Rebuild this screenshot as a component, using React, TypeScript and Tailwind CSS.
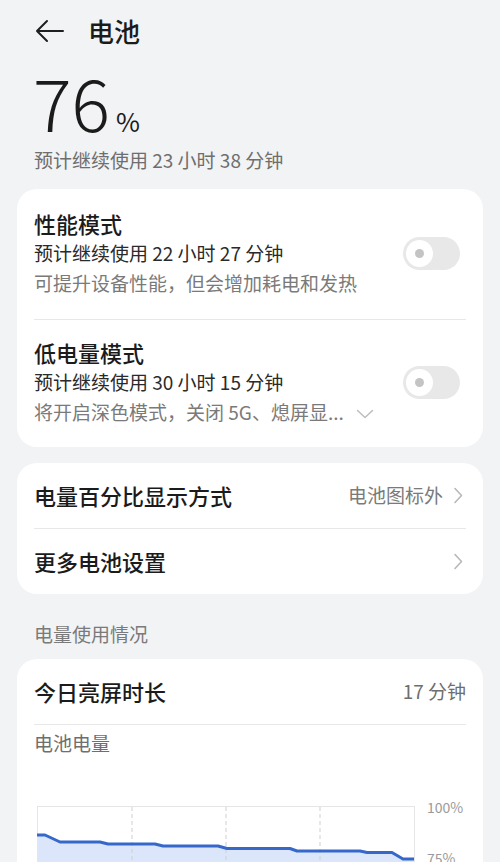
import React from 'react';

const FONT = { fontFamily: '"Noto Sans CJK SC", "Noto Sans", sans-serif' };

function Toggle() {
  return (
    <div className="w-[57px] h-[33px] rounded-full bg-[#e8e8e8] flex items-center pl-[3px] shrink-0 mr-[6px]">
      <div className="w-[27px] h-[27px] rounded-full bg-white flex items-center justify-center">
        <div className="w-[9px] h-[9px] rounded-full bg-[#c4c4c4]" />
      </div>
    </div>
  );
}

function ChevronRight() {
  return (
    <svg width="10" height="17" viewBox="0 0 10 17" className="shrink-0">
      <path d="M2 1.5 L8.5 8.5 L2 15.5" fill="none" stroke="#b8b8b8" strokeWidth="1.6" strokeLinecap="round" strokeLinejoin="round" />
    </svg>
  );
}

function ModeRow({ title, est, desc, more }: { title: string; est: string; desc: string; more?: boolean }) {
  return (
    <div className="flex items-center justify-between">
      <div className="flex flex-col">
        <span className="text-[22px] leading-[30px] font-medium text-[#1b1b1b]">{title}</span>
        <span className="text-[19px] leading-[29px] text-[#2a2a2a]">{est}</span>
        <span className="text-[19px] leading-[31px] text-[#7a7a7a] flex items-center">
          {desc}
          {more && (
            <svg width="18" height="10" viewBox="0 0 18 10" className="ml-[12px] mt-[4px]">
              <path d="M1.5 1.5 L9 8.5 L16.5 1.5" fill="none" stroke="#bdbdbd" strokeWidth="1.5" strokeLinecap="round" strokeLinejoin="round" />
            </svg>
          )}
        </span>
      </div>
      <Toggle />
    </div>
  );
}

const pts: [number, number][] = [
  [0, 29], [8, 29], [23, 36], [63, 36], [71, 38], [118, 38], [126, 40], [181, 40],
  [190, 42.5], [253, 42.5], [260, 45], [323, 45], [330, 46.5], [355, 46.5], [366, 53], [377, 53],
];

function Chart() {
  const line = pts.map((p) => p.join(',')).join(' ');
  const area = `0,120 ${line} 377,120`;
  return (
    <div className="flex mt-[49px] ml-[3px]">
      <svg width="378" height="120" viewBox="0 0 378 120" className="shrink-0">
        <polygon points={area} fill="#dbe6fa" />
        <line x1="0.5" y1="0.5" x2="377.5" y2="0.5" stroke="#e6e6e6" strokeWidth="1" />
        <line x1="0.5" y1="0" x2="0.5" y2="120" stroke="#e6e6e6" strokeWidth="1" />
        <line x1="377.5" y1="0" x2="377.5" y2="120" stroke="#e6e6e6" strokeWidth="1" />
        {[95, 189, 283].map((x) => (
          <line key={x} x1={x} y1="1" x2={x} y2="120" stroke="#cfcfcf" strokeWidth="1" strokeDasharray="4 3" />
        ))}
        <polyline points={line} fill="none" stroke="#3568c9" strokeWidth="3" strokeLinejoin="round" />
      </svg>
      <div className="flex flex-col ml-[12px] text-[14px] text-[#9a9a9a] leading-none">
        <span className="-mt-[6px]">100%</span>
        <span className="mt-[37px]">75%</span>
      </div>
    </div>
  );
}

export default function App() {
  return (
    <div className="w-[500px] h-[862px] overflow-hidden bg-[#f1f3f5]" style={FONT}>
      <div className="h-[62px] flex items-center pl-[35px]">
        <svg width="29" height="24" viewBox="0 0 29 24">
          <path d="M28 12 H2 M12 2 L2 12 L12 22" fill="none" stroke="#1f1f1f" strokeWidth="2" strokeLinecap="round" strokeLinejoin="round" />
        </svg>
        <span className="ml-[24px] text-[26px] font-medium text-[#1b1b1b] leading-none">电池</span>
      </div>

      <div className="pl-[33px] pt-[1px] flex items-baseline">
        <span className="text-[72px] font-light leading-[76px] text-[#1b1b1b]">76</span>
        <span className="ml-[6px] text-[26px] text-[#1b1b1b]">%</span>
      </div>
      <div className="pl-[34px] mt-[6px] text-[19px] leading-[28px] text-[#6e6e6e]">预计继续使用 23 小时 38 分钟</div>

      <div className="mx-[17px] mt-[15px] bg-white rounded-[20px] px-[17px]">
        <div className="pt-[19px] pb-[21px]">
          <ModeRow title="性能模式" est="预计继续使用 22 小时 27 分钟" desc="可提升设备性能，但会增加耗电和发热" />
        </div>
        <div className="h-px bg-[#e8e8e8]" />
        <div className="pt-[17px] pb-[20px]">
          <ModeRow title="低电量模式" est="预计继续使用 30 小时 15 分钟" desc="将开启深色模式，关闭 5G、熄屏显..." more />
        </div>
      </div>

      <div className="mx-[17px] mt-[16px] bg-white rounded-[20px] px-[17px]">
        <div className="h-[65px] flex items-center justify-between">
          <span className="text-[22px] font-medium text-[#1b1b1b]">电量百分比显示方式</span>
          <div className="flex items-center gap-[10px] pr-[3px]">
            <span className="text-[19px] text-[#7a7a7a]">电池图标外</span>
            <ChevronRight />
          </div>
        </div>
        <div className="h-px bg-[#e8e8e8]" />
        <div className="h-[65px] flex items-center justify-between">
          <span className="text-[22px] font-medium text-[#1b1b1b]">更多电池设置</span>
          <div className="pr-[3px]">
            <ChevronRight />
          </div>
        </div>
      </div>

      <div className="pl-[34px] mt-[26px] text-[19px] leading-[28px] text-[#7a7a7a]">电量使用情况</div>

      <div className="mx-[17px] mt-[11px] bg-white rounded-[20px] px-[17px] pb-[40px]">
        <div className="h-[65px] flex items-center justify-between">
          <span className="text-[22px] font-medium text-[#1b1b1b]">今日亮屏时长</span>
          <span className="text-[19px] text-[#6e6e6e]">17 分钟</span>
        </div>
        <div className="h-px bg-[#e8e8e8]" />
        <div className="pt-[4px] text-[19px] leading-[28px] text-[#6e6e6e]">电池电量</div>
        <Chart />
      </div>
    </div>
  );
}
